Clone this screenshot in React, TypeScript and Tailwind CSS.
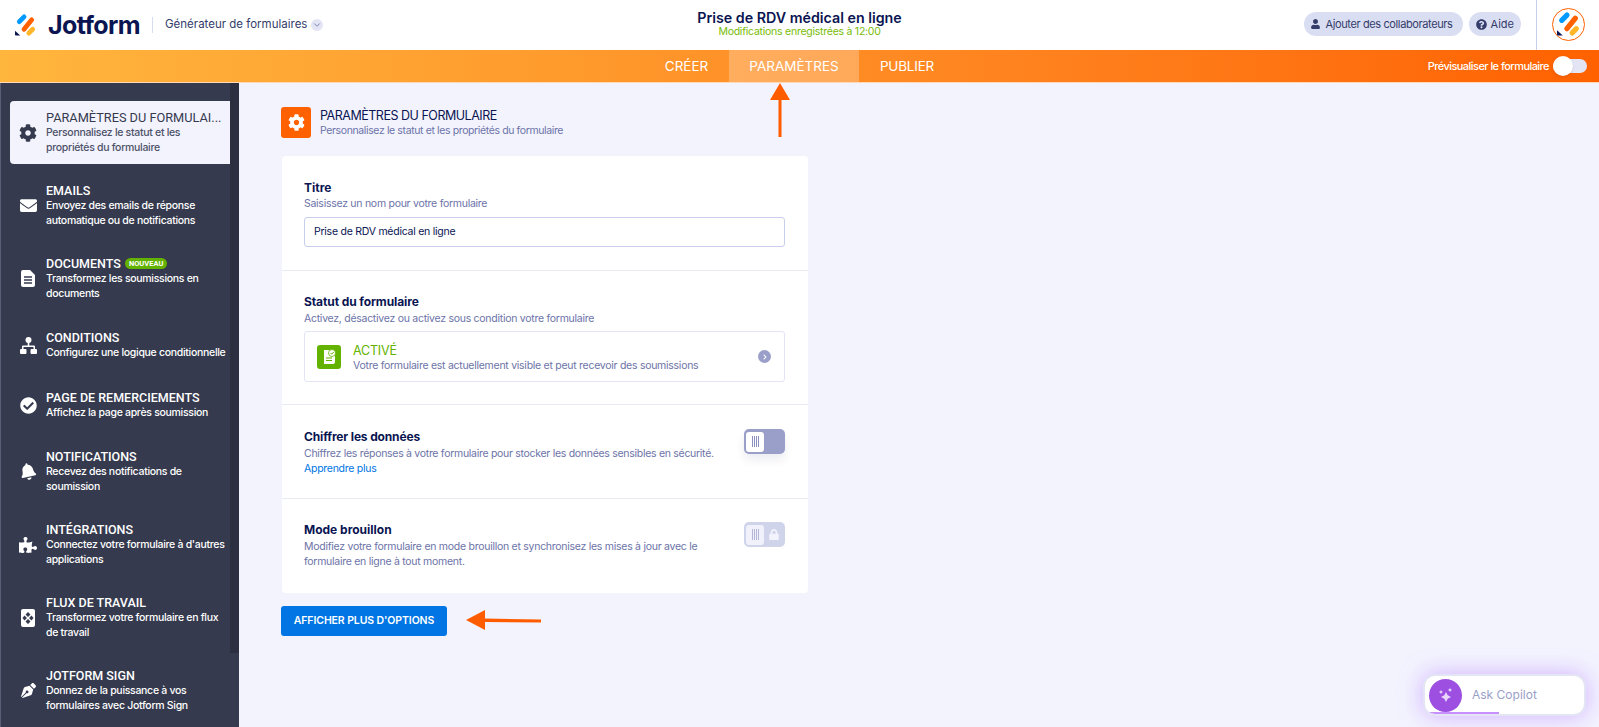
import React from 'react';
import {
  FaBell,
  FaCheckCircle,
  FaChevronRight,
  FaCog,
  FaEnvelope,
  FaLock,
  FaPenNib,
  FaPuzzlePiece,
  FaQuestionCircle,
  FaUser,
} from 'react-icons/fa';
import { FiChevronDown } from 'react-icons/fi';

const Logo = ({ className }: { className: string }) => (
  <svg viewBox="0 0 22 22" className={`${className} overflow-visible`} fill="none" strokeLinecap="round" strokeWidth="5">
    <path d="M4.500 7.500 L9.500 2.500" stroke="#0099ff" />
    <path d="M9.500 15.500 L17.500 5.500" stroke="#ff6100" />
    <path d="M14.500 19.500 L18.500 15.500" stroke="#ffb629" />
    <path d="M0 17 V21 a1 1 0 0 0 1 1 H5.500 Z" fill="#0a1551" strokeWidth="0" />
  </svg>
);

const FlowIcon = () => (
  <svg viewBox="0 0 14 18" className="w-[14px] h-[18px]">
    <rect width="14" height="18" rx="2" fill="#fff" />
    <path d="M7 3 L9.5 5.5 L7 8 L4.5 5.5 Z M7 10 L9.5 12.5 L7 15 L4.5 12.5 Z M3.5 6.5 L6 9 L3.5 11.5 L1.5 9 Z M10.5 6.5 L12.5 9 L10.5 11.5 L8 9 Z" fill="#353a4e" />
  </svg>
);

const DocIcon = () => (
  <svg viewBox="0 0 14 17" className="w-[14px] h-[17px]">
    <path d="M2 0 H9 L14 5 V15 a2 2 0 0 1 -2 2 H2 a2 2 0 0 1 -2 -2 V2 a2 2 0 0 1 2 -2 Z" fill="#fff" />
    <path d="M3 7 H11 M3 10 H11 M3 13 H11" stroke="#353a4e" strokeWidth="1.4" />
  </svg>
);

const TreeIcon = () => (
  <svg viewBox="0 0 17 17" className="w-[17px] h-[17px]" fill="#fff">
    <circle cx="8.5" cy="3" r="3" />
    <path d="M7.7 5 H9.3 V8.5 H14 a1 1 0 0 1 1 1 V12 H13.5 V10 H3.5 V12 H2 V9.5 a1 1 0 0 1 1 -1 H7.7 Z" />
    <rect x="0" y="12" width="6.5" height="5" rx="1" />
    <rect x="10.5" y="12" width="6.5" height="5" rx="1" />
  </svg>
);

const ActiveFormIcon = () => (
  <svg viewBox="0 0 14 16" className="w-[14px] h-[16px]">
    <path d="M2 1 H8 V6 H13 V13 a2 2 0 0 1 -2 2 H2 Z" fill="#fff" />
    <circle cx="10" cy="4" r="3.5" fill="#fff" stroke="#64b200" strokeWidth="0.8" />
    <path d="M8.5 4 L9.7 5.2 L11.7 3" stroke="#64b200" strokeWidth="1" fill="none" />
    <path d="M4 9 H10 M4 11.5 H10" stroke="#64b200" strokeWidth="1.2" />
  </svg>
);

type NavItem = {
  title: string;
  lines: string[];
  icon: React.ReactNode;
  badge?: boolean;
};

const navItems: NavItem[] = [
  {
    title: 'EMAILS',
    lines: ['Envoyez des emails de réponse', 'automatique ou de notifications'],
    icon: <FaEnvelope className="w-[17px] h-[17px]" />,
  },
  {
    title: 'DOCUMENTS',
    lines: ['Transformez les soumissions en', 'documents'],
    icon: <DocIcon />,
    badge: true,
  },
  {
    title: 'CONDITIONS',
    lines: ['Configurez une logique conditionnelle'],
    icon: <TreeIcon />,
  },
  {
    title: 'PAGE DE REMERCIEMENTS',
    lines: ['Affichez la page après soumission'],
    icon: <FaCheckCircle className="w-[17px] h-[17px]" />,
  },
  {
    title: 'NOTIFICATIONS',
    lines: ['Recevez des notifications de', 'soumission'],
    icon: <FaBell className="w-[16px] h-[17px] -rotate-12" />,
  },
  {
    title: 'INTÉGRATIONS',
    lines: ["Connectez votre formulaire à d'autres", 'applications'],
    icon: <FaPuzzlePiece className="w-[18px] h-[18px]" />,
  },
  {
    title: 'FLUX DE TRAVAIL',
    lines: ['Transformez votre formulaire en flux', 'de travail'],
    icon: <FlowIcon />,
  },
  {
    title: 'JOTFORM SIGN',
    lines: ['Donnez de la puissance à vos', 'formulaires avec Jotform Sign'],
    icon: <FaPenNib className="w-[15px] h-[15px]" />,
  },
];

const Toggle = ({ disabled }: { disabled?: boolean }) => (
  <div className={`w-[41px] h-[25px] shrink-0 rounded-[5px] p-[2px] flex items-center ${disabled ? 'bg-[#d0d4ea]' : 'bg-[#9a9fc9] shadow-[0_6px_10px_rgba(10,21,81,0.08)]'}`}>
    <div className={`w-[18px] h-[20px] rounded-[3px] flex items-center justify-center gap-[1px] ${disabled ? 'bg-[#f0f1fa]' : 'bg-white'}`}>
      {[0, 1, 2, 3].map((i) => (
        <span key={i} className={`w-px h-[11px] ${disabled ? 'bg-[#b4b8d6]' : 'bg-[#8a8fbd]'}`} />
      ))}
    </div>
    {disabled && <FaLock className="ml-[5px] w-[10px] h-[11px] text-[#f3f3fe]" />}
  </div>
);

export default function App() {
  return (
    <div className="h-[727px] w-[1599px] overflow-hidden relative flex flex-col bg-[#f3f3fe] text-[#0a1551] font-['Inter','Liberation_Sans',sans-serif]">
      {/* top bar */}
      <header className="h-[50px] shrink-0 bg-white grid grid-cols-[1fr_auto_1fr]">
        <div className="flex items-center pl-[15px]">
          <Logo className="w-[21px] h-[22px]" />
          <span className="ml-[12px] text-[25px] font-bold tracking-[-0.6px] leading-none">Jotform</span>
          <span className="ml-[12px] w-px h-[16px] bg-[#d8dcf0]" />
          <span className="ml-[12px] text-[11.5px] text-[#343c6a]">Générateur de formulaires</span>
          <span className="ml-[4px] w-[12px] h-[12px] rounded-full bg-[#e3e5f5] flex items-center justify-center">
            <FiChevronDown className="w-[10px] h-[10px] text-[#6c73a8]" />
          </span>
        </div>
        <div className="flex flex-col items-center pt-[10px]">
          <span className="text-[14.25px] leading-[16px] font-semibold">Prise de RDV médical en ligne</span>
          <span className="text-[10.5px] leading-[12px] tracking-[-0.25px] text-[#78bb07]">Modifications enregistrées à 12:00</span>
        </div>
        <div className="flex justify-end">
          <div className="flex items-center gap-[6px] pb-[2px]">
            <span className="h-[24px] pl-[7px] pr-[10px] rounded-full bg-[#dadef3] flex items-center gap-[5px] text-[11px] tracking-[-0.38px] text-[#343c6a]">
              <FaUser className="w-[9px] h-[10px]" />
              Ajouter des collaborateurs
            </span>
            <span className="h-[24px] px-[7px] rounded-full bg-[#dadef3] flex items-center gap-[4px] text-[11px] text-[#343c6a]">
              <FaQuestionCircle className="w-[11px] h-[11px]" />
              Aide
            </span>
          </div>
          <div className="ml-[15px] w-[63px] border-l border-[#c8ceed] flex items-center justify-center pb-[2px]">
            <div className="w-[33px] h-[33px] rounded-full border border-[#ff6100] flex items-center justify-center">
              <Logo className="w-[23px] h-[24px]" />
            </div>
          </div>
        </div>
      </header>

      {/* tab bar */}
      <nav className="h-[33px] shrink-0 bg-gradient-to-r from-[#ffb63d] to-[#ff6100] border-b border-[#ffd9b8] grid grid-cols-[1fr_auto_1fr]">
        <div />
        <div className="flex text-[13.5px] text-white">
          <span className="w-[85px] flex items-center justify-center">CRÉER</span>
          <span className="w-[130px] flex items-center justify-center bg-white/25">PARAMÈTRES</span>
          <span className="w-[96px] flex items-center justify-center tracking-[-0.2px]">PUBLIER</span>
        </div>
        <div className="flex items-center justify-end pr-[12px] text-[11px] font-medium tracking-[-0.55px] text-white">
          Prévisualiser le formulaire
          <span className="ml-[4px] w-[34px] h-[14px] rounded-full bg-[#e3e5f5] flex items-center">
            <span className="w-[20px] h-[20px] rounded-full bg-white shadow" />
          </span>
        </div>
      </nav>

      <div className="flex-1 flex min-h-0">
        {/* sidebar */}
        <aside className="w-[239px] shrink-0 flex bg-[#353a4e] border-l border-[#5a5f78] overflow-hidden">
          <div className="w-[229px] pt-[18px] pl-[9px]">
            <div className="h-[63px] mb-[10px] bg-[#f3f3fe] rounded-l-[4px] flex items-center text-[#353a4e]">
              <div className="w-[36px] flex justify-center shrink-0">
                <FaCog className="w-[18px] h-[18px]" />
              </div>
              <div>
                <div className="text-[12.75px] leading-[15px] mb-px font-['Roboto',sans-serif]">PARAMÈTRES DU FORMULAI...</div>
                <div className="text-[10.5px] leading-[14.5px] tracking-[-0.3px] font-medium text-[#4d5268]">Personnalisez le statut et les</div>
                <div className="text-[10.5px] leading-[14.5px] tracking-[-0.3px] font-medium text-[#4d5268]">propriétés du formulaire</div>
              </div>
            </div>
            {navItems.map((item) => (
              <div key={item.title} className={`${item.lines.length > 1 ? 'h-[63px]' : 'h-[50px]'} mb-[10px] flex items-center text-white`}>
                <div className="w-[36px] flex justify-center shrink-0">{item.icon}</div>
                <div>
                  <div className="flex items-center text-[12.5px] leading-[15px] mb-px font-medium font-['Roboto',sans-serif]">
                    {item.title}
                    {item.badge && (
                      <span className="ml-[4px] h-[11px] px-[4px] rounded-full bg-[#64b200] text-[7.5px] leading-[11px] font-bold">NOUVEAU</span>
                    )}
                  </div>
                  {item.lines.map((line) => (
                    <div key={line} className="text-[10.5px] leading-[14.5px] tracking-[-0.3px] font-medium whitespace-nowrap">{line}</div>
                  ))}
                </div>
              </div>
            ))}
          </div>
          <div className="w-[9px] h-[570px] bg-[#2c2f3f]" />
        </aside>

        {/* main */}
        <main className="flex-1 pl-[42px] pt-[23px]">
          <div className="flex items-center gap-[9px]">
            <div className="w-[30px] h-[31px] rounded-[3px] bg-[#ff6100] flex items-center justify-center">
              <FaCog className="w-[17px] h-[17px] text-white" />
            </div>
            <div className="pt-[2px]">
              <div className="text-[12.5px] leading-[15px] tracking-[-0.48px]">PARAMÈTRES DU FORMULAIRE</div>
              <div className="text-[10.5px] leading-[15px] tracking-[-0.38px] text-[#6c73a8]">Personnalisez le statut et les propriétés du formulaire</div>
            </div>
          </div>

          <div className="mt-[18px] ml-px w-[526px] bg-white rounded-[4px]">
            <section className="h-[115px] pl-[22px] pr-[23px] pt-[24px] border-b border-[#e8e9f3]">
              <div className="text-[12px] leading-[15px] font-bold">Titre</div>
              <div className="text-[10.5px] leading-[15px] tracking-[-0.27px] mt-px text-[#6c73a8]">Saisissez un nom pour votre formulaire</div>
              <div className="mt-[6px] h-[30px] w-[481px] rounded-[3px] border border-[#c8ceed] flex items-center pl-[9px] text-[10.5px] tracking-[-0.25px]">Prise de RDV médical en ligne</div>
            </section>

            <section className="h-[134px] pl-[22px] pr-[23px] pt-[23px] border-b border-[#e8e9f3]">
              <div className="text-[12px] leading-[15px] font-bold tracking-[-0.1px]">Statut du formulaire</div>
              <div className="text-[10.5px] leading-[15px] tracking-[-0.27px] mt-[2px] text-[#6c73a8]">Activez, désactivez ou activez sous condition votre formulaire</div>
              <div className="mt-[5px] h-[51px] w-[481px] rounded-[3px] border border-[#e3e5f5] flex items-center pl-[12px] pr-[13px]">
                <div className="w-[24px] h-[24px] rounded-[3px] bg-[#64b200] flex items-center justify-center">
                  <ActiveFormIcon />
                </div>
                <div className="ml-[12px] flex-1 pt-[2px]">
                  <div className="text-[12.5px] leading-[15px] tracking-[-0.2px] text-[#64b200]">ACTIVÉ</div>
                  <div className="text-[10.5px] leading-[15px] tracking-[-0.27px] text-[#6c73a8]">Votre formulaire est actuellement visible et peut recevoir des soumissions</div>
                </div>
                <span className="w-[13px] h-[13px] rounded-full bg-[#9a9fc9] flex items-center justify-center">
                  <FaChevronRight className="w-[6px] h-[6px] text-white" />
                </span>
              </div>
            </section>

            <section className="h-[94px] pl-[22px] pr-[23px] pt-[24px] border-b border-[#e8e9f3] flex justify-between">
              <div>
                <div className="text-[12px] leading-[15px] font-bold tracking-[-0.15px]">Chiffrer les données</div>
                <div className="text-[10.5px] leading-[15px] tracking-[-0.29px] mt-[2px] text-[#6c73a8]">Chiffrez les réponses à votre formulaire pour stocker les données sensibles en sécurité.</div>
                <div className="text-[10.5px] leading-[15px] tracking-[-0.27px] text-[#0075e3]">Apprendre plus</div>
              </div>
              <Toggle />
            </section>

            <section className="h-[94px] pl-[22px] pr-[23px] pt-[23px] flex justify-between">
              <div>
                <div className="text-[12px] leading-[15px] font-bold">Mode brouillon</div>
                <div className="text-[10.5px] leading-[15px] tracking-[-0.27px] mt-[2px] text-[#6c73a8] w-[420px]">Modifiez votre formulaire en mode brouillon et synchronisez les mises à jour avec le formulaire en ligne à tout moment.</div>
              </div>
              <Toggle disabled />
            </section>
          </div>

          <button className="mt-[13px] h-[30px] w-[166px] rounded-[3px] bg-[#0075e3] text-white text-[10.5px] font-semibold tracking-[-0.1px]">AFFICHER PLUS D'OPTIONS</button>
        </main>
      </div>

      {/* annotation arrows */}
      <svg viewBox="0 0 20 54" className="absolute left-[770px] top-[83px] w-[20px] h-[54px]">
        <path d="M10 0 L20 17 H11.5 V54 H8.5 V17 H0 Z" fill="#ff5c00" />
      </svg>
      <svg viewBox="0 0 81 20" className="absolute left-[466px] top-[610px] w-[81px] h-[20px]">
        <path d="M0 10 L19 0 V8.5 L75 9.5 V12.5 L19 12 V20 Z" fill="#ff5c00" />
      </svg>

      {/* copilot */}
      <div className="absolute left-[1423px] top-[674px] w-[163px] h-[42px] rounded-[12px] bg-white border-2 border-[#e3e5f5] shadow-[0_0_22px_rgba(180,120,255,0.55)] flex items-center pl-[4px] overflow-hidden">
        <div className="w-[33px] h-[33px] rounded-full bg-[#9c4fe0] flex items-center justify-center">
          <svg viewBox="0 0 16 16" className="w-[16px] h-[16px]" fill="#e9d8fb">
            <path d="M8 5 L9.7 8.3 L13 10 L9.7 11.7 L8 15 L6.3 11.7 L3 10 L6.3 8.3 Z" />
            <path d="M3 3 L3.7 4.3 L5 5 L3.7 5.7 L3 7 L2.3 5.7 L1 5 L2.3 4.3 Z" />
            <path d="M12 1 L12.8 2.2 L14 3 L12.8 3.8 L12 5 L11.2 3.8 L10 3 L11.2 2.2 Z" />
          </svg>
        </div>
        <span className="ml-[10px] text-[12px] text-[#9a9fc9]">Ask Copilot</span>
        <span className="absolute left-0 bottom-0 w-[74px] h-[2px] bg-[#c890ff]" />
      </div>
    </div>
  );
}
